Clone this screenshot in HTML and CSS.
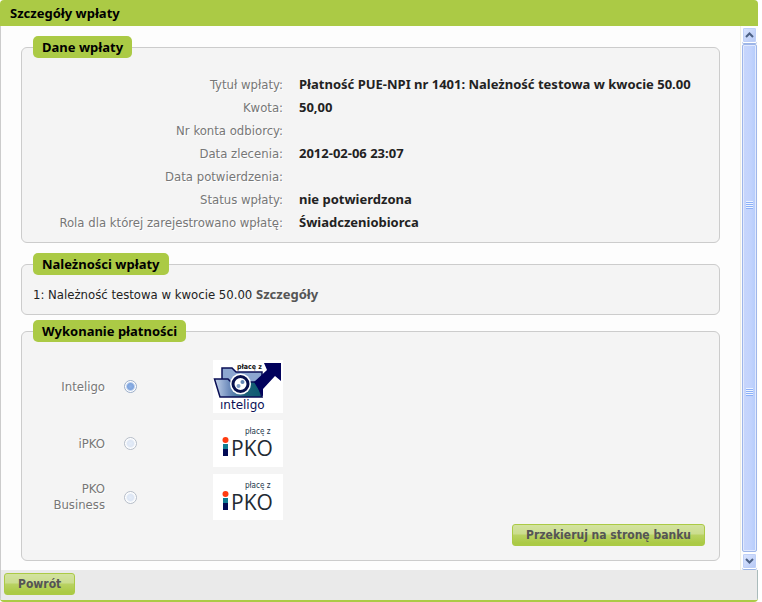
FILE: index.html
```
<!DOCTYPE html>
<html lang="pl">
<head>
    <meta charset="UTF-8">
    <meta name="viewport" content="width=device-width, initial-scale=1.0">
    <title>Szczegóły wpłaty</title>
    <link rel="stylesheet" href="styles.css">
</head>
<body>

<div class="dialog">
    <h1 class="dialog-title">Szczegóły wpłaty</h1>

    <div class="dialog-body">
        <div class="content">
            <fieldset class="section details">
                <legend>Dane wpłaty</legend>
                <dl class="data">
                    <dt>Tytuł wpłaty:</dt>
                    <dd>Płatność PUE-NPI nr 1401: Należność testowa w kwocie 50.00</dd>
                    <dt>Kwota:</dt>
                    <dd>50,00</dd>
                    <dt>Nr konta odbiorcy:</dt>
                    <dd></dd>
                    <dt>Data zlecenia:</dt>
                    <dd>2012-02-06 23:07</dd>
                    <dt>Data potwierdzenia:</dt>
                    <dd></dd>
                    <dt>Status wpłaty:</dt>
                    <dd>nie potwierdzona</dd>
                    <dt>Rola dla której zarejestrowano wpłatę:</dt>
                    <dd>Świadczeniobiorca</dd>
                </dl>
            </fieldset>

            <fieldset class="section dues">
                <legend>Należności wpłaty</legend>
                <p>1: Należność testowa w kwocie 50.00 <a href="#">Szczegóły</a></p>
            </fieldset>

            <fieldset class="section payment">
                <legend>Wykonanie płatności</legend>
                <div class="banks">
                    <label for="inteligo">Inteligo</label>
                    <input type="radio" name="bank" id="inteligo" checked>
                    <!-- Inteligo logo -->
                    <svg class="logo" width="70" height="53" viewBox="0 0 70 53">
                        <defs>
                            <linearGradient id="folder" x1="0" y1="0" x2="1" y2="0">
                                <stop offset="0" stop-color="#c3d2ea"/>
                                <stop offset="0.3" stop-color="#6f8dbd"/>
                                <stop offset="0.65" stop-color="#1d6078"/>
                                <stop offset="1" stop-color="#0a5a70"/>
                            </linearGradient>
                        </defs>
                        <rect width="70" height="53" fill="#fff"/>
                        <path d="M9 20V8h10l4 4h26v18H9z" fill="#8ca6d0" stroke="#0a0f55" stroke-width="1.500"/>
                        <path d="M22 2h28l4 4-4 5H24z" fill="#fff"/>
                        <path d="M1.500 19H15l3 3h26l5 15H7z" fill="url(#folder)" stroke="#0a0f55" stroke-width="1.500"/>
                        <path d="M51 3h17v18l-6-5-12 13v8l-9-15 13-12z" fill="#02025c"/>
                        <circle cx="27.500" cy="24" r="10.500" fill="#fff"/>
                        <circle cx="27.500" cy="24" r="7.500" fill="#fff" stroke="#07104d" stroke-width="3"/>
                        <circle cx="25.500" cy="26" r="2" fill="#7e9cc5"/>
                        <circle cx="29.500" cy="22" r="2" fill="#6487b5"/>
                        <text x="24" y="9" class="logo-tag">płacę z</text>
                        <text x="7" y="49" class="inteligo-name">ınteligo</text>
                    </svg>

                    <label for="ipko">iPKO</label>
                    <input type="radio" name="bank" id="ipko">
                    <!-- iPKO logo -->
                    <svg class="logo" width="70" height="47" viewBox="0 0 70 47">
                        <rect width="70" height="47" fill="#fff"/>
                        <text x="32" y="14" class="ipko-tag">płacę z</text>
                        <circle cx="12.500" cy="20" r="3" fill="#ff3b10"/>
                        <path d="M10 24h5v6h-5z" fill="#107c92"/>
                        <path d="M10 29h5v7h-5z" fill="#020b55"/>
                        <text x="18" y="36" class="ipko-name">PKO</text>
                    </svg>

                    <label for="business">PKO Business</label>
                    <input type="radio" name="bank" id="business">
                    <!-- iPKO logo -->
                    <svg class="logo" width="70" height="46" viewBox="0 0 70 46">
                        <rect width="70" height="46" fill="#fff"/>
                        <text x="32" y="14" class="ipko-tag">płacę z</text>
                        <circle cx="12.500" cy="20" r="3" fill="#ff3b10"/>
                        <path d="M10 24h5v6h-5z" fill="#107c92"/>
                        <path d="M10 29h5v7h-5z" fill="#020b55"/>
                        <text x="18" y="36" class="ipko-name">PKO</text>
                    </svg>
                </div>
                <div class="actions">
                    <button type="submit" class="btn">Przekieruj na stronę banku</button>
                </div>
            </fieldset>
        </div>

        <div class="scrollbar">
            <button type="button" class="scroll-btn" aria-label="W górę">
                <svg width="9" height="6" viewBox="0 0 9 6"><path d="M1 5l3.500-3.500L8 5" fill="none" stroke="#4d6185" stroke-width="2"/></svg>
            </button>
            <div class="thumb">
                <span class="grip"></span>
                <span class="grip"></span>
            </div>
            <button type="button" class="scroll-btn" aria-label="W dół">
                <svg width="9" height="6" viewBox="0 0 9 6"><path d="M1 1l3.500 3.500L8 1" fill="none" stroke="#4d6185" stroke-width="2"/></svg>
            </button>
        </div>
    </div>

    <div class="dialog-footer">
        <button type="button" class="btn">Powrót</button>
    </div>
</div>

</body>
</html>
```
FILE: styles.css
```
* {
    box-sizing: border-box;
}
body {
    margin: 0;
    background-color: #fff;
    color: #222;
    font-family: "DejaVu Sans Condensed", "DejaVu Sans", Tahoma, sans-serif;
    font-size: 13px;
}
.dialog {
    display: flex;
    flex-direction: column;
    min-height: 100vh;
    margin-right: 4px;
    border-bottom: 2px solid #abca45;
    border-radius: 4px;
    overflow: hidden;
}
.dialog-title {
    margin: 0;
    padding: 0 10px;
    background-color: #abca45;
    color: #000;
    font-family: "Noto Sans", Tahoma, sans-serif;
    font-size: 13px;
    line-height: 26px;
}
.dialog-body {
    display: flex;
    flex: 1;
    border-left: 1px solid #ccc;
    background-color: #fdfdfd;
}
.content {
    flex: 1;
    padding: 10px 20px 9px;
}

/* sections */
.section {
    margin: 0;
    padding: 0 14px 0 11px;
    border: 1px solid #ccc;
    border-radius: 6px;
    background-color: #f4f4f4;
}
.section legend {
    padding: 0 9px;
    border-radius: 5px;
    background-color: #abca45;
    color: #000;
    font-family: "Noto Sans", Tahoma, sans-serif;
    font-weight: bold;
    line-height: 22px;
}
.details {
    margin-bottom: 10px;
}
.dues {
    margin-bottom: 5px;
}
.data {
    display: grid;
    grid-template-columns: 250px 1fr;
    grid-auto-rows: 23px;
    column-gap: 16px;
    margin: 0;
    padding: 15px 0 8px;
    line-height: 23px;
}
.data dt {
    color: #777;
    text-align: right;
    text-shadow: 1px 1px 0 #fff;
}
.data dd {
    margin: 0;
    font-family: "Noto Sans", Tahoma, sans-serif;
    font-weight: bold;
    white-space: nowrap;
}
.dues p {
    margin: 0;
    padding: 9px 0;
    line-height: 20px;
}
.dues a {
    color: #555;
    font-family: "Noto Sans", Tahoma, sans-serif;
    font-weight: bold;
    text-decoration: none;
}

/* bank list */
.banks {
    display: grid;
    grid-template-columns: 72px 14px 70px;
    align-items: center;
    gap: 7px 19px;
    padding-top: 18px;
}
.banks label {
    color: #777;
    line-height: 16px;
    text-align: right;
    text-shadow: 1px 1px 0 #fff;
}
.banks input {
    appearance: none;
    width: 13px;
    height: 13px;
    margin: 0;
    border: 1px solid #b5bdc9;
    border-radius: 50%;
    background: radial-gradient(circle, #e4ecf8 0, #dde6f4 3px, #fff 5px);
}
.banks input:checked {
    border-color: #9aadc9;
    background: radial-gradient(circle, #8db1e6 0, #7fa4dd 3px, #fff 5px);
}
.logo {
    display: block;
    margin-left: 56px;
}
.logo-tag {
    fill: #111;
    font: bold 7px "DejaVu Sans Condensed", sans-serif;
}
.inteligo-name {
    fill: #0b1157;
    font: 12px "DejaVu Sans", sans-serif;
}
.ipko-tag {
    fill: #20364a;
    font: 8px "DejaVu Sans Condensed", sans-serif;
}
.ipko-name {
    fill: #222a33;
    font: 21px "Open Sans", sans-serif;
}
.actions {
    display: flex;
    justify-content: flex-end;
    padding: 4px 0 14px;
}

/* buttons */
.btn {
    height: 22px;
    padding: 0 13px;
    border: 1px solid #abca45;
    border-radius: 3px;
    background: linear-gradient(#d3e3a0 0, #cbdd8e 9px, #b9d263 10px, #abca45 18px);
    color: #555;
    font-family: inherit;
    font-size: 12px;
    font-weight: bold;
    line-height: 20px;
}
.dialog-footer {
    padding: 3px 3px 5px;
    border-left: 1px solid #ccc;
    border-right: 1px solid #abb;
    background-color: #eaeaea;
}

/* scrollbar */
.scrollbar {
    display: flex;
    flex-direction: column;
    gap: 1px;
    width: 18px;
    padding: 1px;
    border-left: 1px solid #eeede5;
    background-color: #fdfdfd;
}
.scroll-btn {
    display: flex;
    align-items: center;
    justify-content: center;
    height: 16px;
    padding: 0;
    border: 1px solid #fff;
    border-radius: 2px;
    background: linear-gradient(135deg, #dce6ff, #b5c8f5);
    box-shadow: inset 0 0 0 1px #bfd0f8, 0 1px 0 #9cb5e5;
}
.thumb {
    display: flex;
    flex: 1;
    flex-direction: column;
    align-items: center;
    justify-content: space-around;
    padding: 66px 0;
    border: 1px solid #9fb6e9;
    border-radius: 2px;
    background: linear-gradient(to right, #c8d6fb, #c2d3fd 60%, #b5ccfb);
    box-shadow: inset 0 0 0 1px #e1e9fd;
}
.grip {
    width: 7px;
    height: 8px;
    background: repeating-linear-gradient(#eef4fe 0, #eef4fe 1px, #8cb0f8 1px, #8cb0f8 2px);
}
```
